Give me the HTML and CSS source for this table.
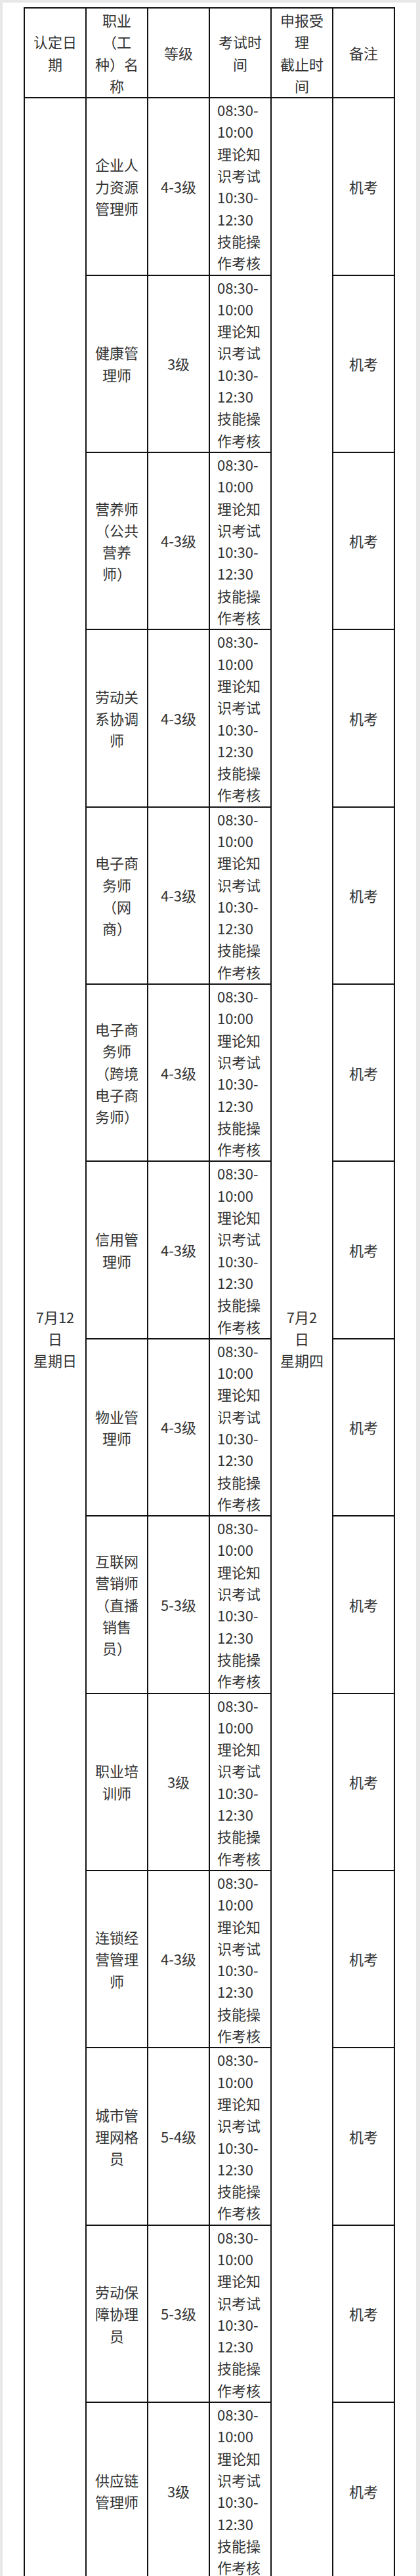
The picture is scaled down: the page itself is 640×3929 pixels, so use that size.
FILE: index.html
```html
<!DOCTYPE html>
<html lang="zh-CN">
<head>
<meta charset="utf-8">
<title>考试安排</title>
<link rel="stylesheet" href="styles.css">
</head>
<body>
<div class="sheet">
<table class="plan">
<colgroup><col><col><col><col><col><col></colgroup>
<thead>
<tr>
<th>认定日<br>期</th>
<th>职业<br>（工<br>种）名<br>称</th>
<th>等级</th>
<th>考试时<br>间</th>
<th>申报受<br>理<br>截止时<br>间</th>
<th>备注</th>
</tr>
</thead>
<tbody>
<tr>
<td rowspan="14">7月12<br>日<br>星期日</td>
<td>企业人<br>力资源<br>管理师</td>
<td>4-3级</td>
<td class="time">08:30-<br>10:00<br>理论知<br>识考试<br>10:30-<br>12:30<br>技能操<br>作考核</td>
<td rowspan="14">7月2<br>日<br>星期四</td>
<td>机考</td>
</tr>
<tr>
<td>健康管<br>理师</td>
<td>3级</td>
<td class="time">08:30-<br>10:00<br>理论知<br>识考试<br>10:30-<br>12:30<br>技能操<br>作考核</td>
<td>机考</td>
</tr>
<tr>
<td>营养师<br>（公共<br>营养<br>师）</td>
<td>4-3级</td>
<td class="time">08:30-<br>10:00<br>理论知<br>识考试<br>10:30-<br>12:30<br>技能操<br>作考核</td>
<td>机考</td>
</tr>
<tr>
<td>劳动关<br>系协调<br>师</td>
<td>4-3级</td>
<td class="time">08:30-<br>10:00<br>理论知<br>识考试<br>10:30-<br>12:30<br>技能操<br>作考核</td>
<td>机考</td>
</tr>
<tr>
<td>电子商<br>务师<br>（网<br>商）</td>
<td>4-3级</td>
<td class="time">08:30-<br>10:00<br>理论知<br>识考试<br>10:30-<br>12:30<br>技能操<br>作考核</td>
<td>机考</td>
</tr>
<tr>
<td>电子商<br>务师<br>（跨境<br>电子商<br>务师）</td>
<td>4-3级</td>
<td class="time">08:30-<br>10:00<br>理论知<br>识考试<br>10:30-<br>12:30<br>技能操<br>作考核</td>
<td>机考</td>
</tr>
<tr>
<td>信用管<br>理师</td>
<td>4-3级</td>
<td class="time">08:30-<br>10:00<br>理论知<br>识考试<br>10:30-<br>12:30<br>技能操<br>作考核</td>
<td>机考</td>
</tr>
<tr>
<td>物业管<br>理师</td>
<td>4-3级</td>
<td class="time">08:30-<br>10:00<br>理论知<br>识考试<br>10:30-<br>12:30<br>技能操<br>作考核</td>
<td>机考</td>
</tr>
<tr>
<td>互联网<br>营销师<br>（直播<br>销售<br>员）</td>
<td>5-3级</td>
<td class="time">08:30-<br>10:00<br>理论知<br>识考试<br>10:30-<br>12:30<br>技能操<br>作考核</td>
<td>机考</td>
</tr>
<tr>
<td>职业培<br>训师</td>
<td>3级</td>
<td class="time">08:30-<br>10:00<br>理论知<br>识考试<br>10:30-<br>12:30<br>技能操<br>作考核</td>
<td>机考</td>
</tr>
<tr>
<td>连锁经<br>营管理<br>师</td>
<td>4-3级</td>
<td class="time">08:30-<br>10:00<br>理论知<br>识考试<br>10:30-<br>12:30<br>技能操<br>作考核</td>
<td>机考</td>
</tr>
<tr>
<td>城市管<br>理网格<br>员</td>
<td>5-4级</td>
<td class="time">08:30-<br>10:00<br>理论知<br>识考试<br>10:30-<br>12:30<br>技能操<br>作考核</td>
<td>机考</td>
</tr>
<tr>
<td>劳动保<br>障协理<br>员</td>
<td>5-3级</td>
<td class="time">08:30-<br>10:00<br>理论知<br>识考试<br>10:30-<br>12:30<br>技能操<br>作考核</td>
<td>机考</td>
</tr>
<tr>
<td>供应链<br>管理师</td>
<td>3级</td>
<td class="time">08:30-<br>10:00<br>理论知<br>识考试<br>10:30-<br>12:30<br>技能操<br>作考核</td>
<td>机考</td>
</tr>
</tbody>
</table>
</div>
</body>
</html>
```

FILE: styles.css
```css
html, body {
  margin: 0;
  padding: 0;
  background: #e8e8e8;
}

body {
  padding: 4px 6px 0 4px;
}

.sheet {
  background: #ffffff;
  padding-top: 7px;
  min-height: 3925px;
  box-sizing: border-box;
}

.plan {
  width: 566px;
  margin: 0 auto;
  border-collapse: collapse;
  table-layout: fixed;
  font-family: "Noto Sans CJK SC", "Noto Sans", sans-serif;
  font-size: 22px;
  line-height: 33.3px;
  color: #333333;
}

.plan th,
.plan td {
  border: 2px solid #111111;
  padding: 1px 8px 1px 8px;
  text-align: center;
  vertical-align: middle;
  font-weight: normal;
  white-space: nowrap;
}

.plan td.time {
  text-align: left;
  padding-left: 11px;
  padding-right: 4px;
}
```
